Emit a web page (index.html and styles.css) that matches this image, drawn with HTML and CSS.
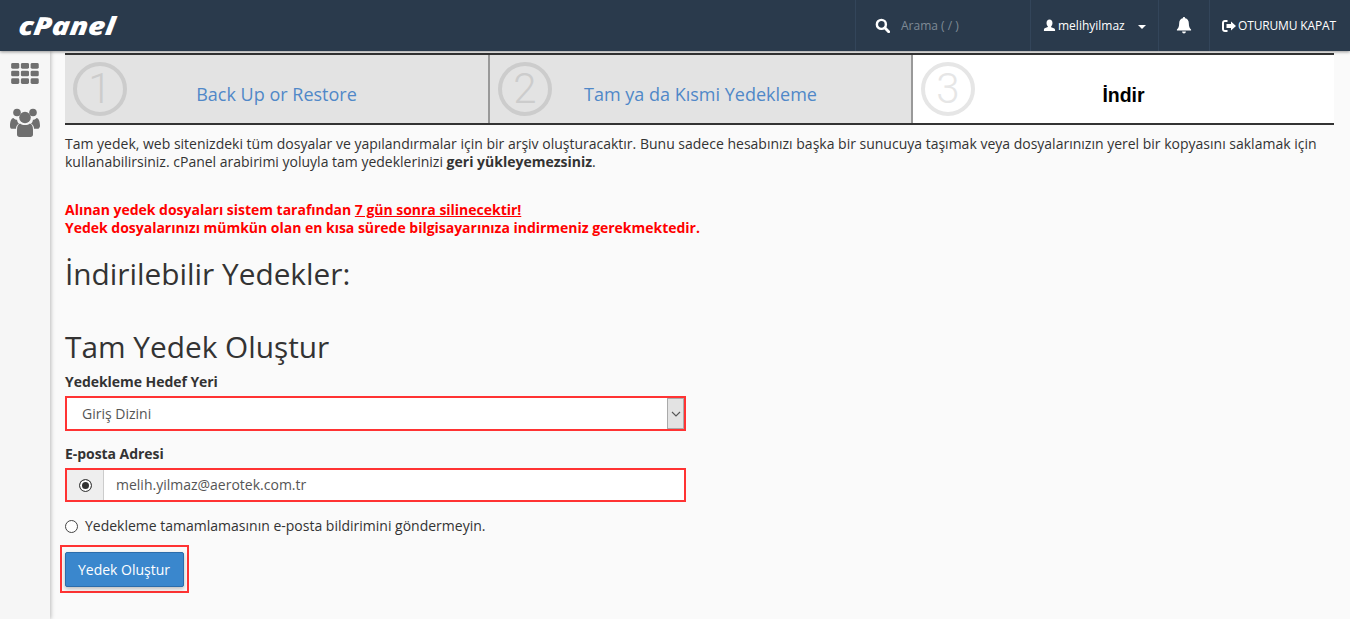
FILE: index.html
```html
<!DOCTYPE html>
<html lang="tr">
<head>
	<meta charset="utf-8">
	<title>Yedekleme Sihirbazı</title>
	<link rel="stylesheet" href="styles.css">
</head>
<body>
	<header class="topbar">
		<a class="logo" href="#">cPanel</a>
		<div class="top-right">
			<div class="top-item search">
				<svg class="icon-search" viewBox="0 0 16 16" width="15" height="15"><circle cx="6.8" cy="6.8" r="4.8" fill="none" stroke="#fff" stroke-width="2.6"/><path d="M10.4 10.4 14.6 14.6" stroke="#fff" stroke-width="3" stroke-linecap="round"/></svg>
				<span class="search-text">Arama ( / )</span>
			</div>
			<div class="top-item user">
				<svg viewBox="0 0 14 14" width="13" height="13"><path d="M7 .5c2 0 3.200 1.500 3.200 3.700 0 1.500-.6 2.800-1.400 3.500v1.300c1.800.7 4.200 1.200 4.200 2.700V13H1v-1.800c0-1.500 2.400-2 4.200-2.700V7.700C4.400 7 3.800 5.700 3.800 4.200 3.800 2 5 .5 7 .5z" fill="#fff"/></svg>
				<span>melihyilmaz</span>
				<i class="caret"></i>
			</div>
			<div class="top-item bell">
				<svg viewBox="0 0 16 18" width="16" height="17"><path d="M8 0c.7 0 1.200.5 1.200 1.200 2.600.5 3.900 2.600 3.900 5.300 0 3.500 1 5.300 2.400 6.700v1.100H.5v-1.100C1.900 11.800 2.900 10 2.900 6.500c0-2.700 1.300-4.800 3.900-5.300C6.800.5 7.300 0 8 0zM6 15.400h4c0 1.200-.9 2.100-2 2.100s-2-.9-2-2.100z" fill="#fff"/></svg>
			</div>
			<div class="top-item logout">
				<svg viewBox="0 0 14 12" width="14" height="12"><path d="M5.500 0v2H3C2.400 2 2 2.400 2 3v6c0 .6.400 1 1 1h2.500v2H3c-1.700 0-3-1.300-3-3V3c0-1.700 1.300-3 3-3zM9 1.500 14 6l-5 4.500V8H4.500V4H9z" fill="#fff"/></svg>
				<span>OTURUMU KAPAT</span>
			</div>
		</div>
	</header>

	<div class="page">
		<aside class="sidebar">
			<svg viewBox="0 0 29 22" width="28" height="21" fill="#6f6f6f">
				<rect x="0" y="0" width="8.500" height="6" rx="1.500"/><rect x="10.200" y="0" width="8.500" height="6" rx="1.500"/><rect x="20.400" y="0" width="8.500" height="6" rx="1.500"/>
				<rect x="0" y="8" width="8.500" height="6" rx="1.500"/><rect x="10.200" y="8" width="8.500" height="6" rx="1.500"/><rect x="20.400" y="8" width="8.500" height="6" rx="1.500"/>
				<rect x="0" y="16" width="8.500" height="6" rx="1.500"/><rect x="10.200" y="16" width="8.500" height="6" rx="1.500"/><rect x="20.400" y="16" width="8.500" height="6" rx="1.500"/>
			</svg>
			<svg viewBox="0 0 30 29" width="30" height="29" fill="#6f6f6f">
				<circle cx="7" cy="4.500" r="3.800"/><circle cx="23" cy="4.500" r="3.800"/><circle cx="15" cy="9.500" r="5.800"/>
				<path d="M0 18c0-5 1.500-8 3.500-8 .8 1.200 2 1.800 3.500 1.800.3 2 1 3.200 2 4-2 1-3 2.500-3 5H1.500C.5 20.800 0 19.500 0 18z"/>
				<path d="M30 18c0-5-1.500-8-3.500-8-.8 1.200-2 1.800-3.500 1.800-.3 2-1 3.200-2 4 2 1 3 2.500 3 5h4.500c1-.8 1.500-2.100 1.500-2.800z"/>
				<path d="M10 15.500c1.300 1 3 1.500 5 1.500s3.700-.5 5-1.500c1.800.5 3 2.500 3 6.500v4.500c0 1.300-1 2.500-2.500 2.500h-11C8 29 7 27.800 7 26.500V22c0-4 1.200-6 3-6.500z"/>
			</svg>
		</aside>

		<main class="content">
			<div class="steps">
				<div class="step">
					<span class="step-num">1</span>
					<a class="step-title" href="#">Back Up or Restore</a>
				</div>
				<div class="step">
					<span class="step-num">2</span>
					<a class="step-title" href="#">Tam ya da Kısmi Yedekleme</a>
				</div>
				<div class="step active">
					<span class="step-num">3</span>
					<span class="step-title">İndir</span>
				</div>
			</div>

			<p class="intro">Tam yedek, web sitenizdeki tüm dosyalar ve yapılandırmalar için bir arşiv oluşturacaktır. Bunu sadece hesabınızı başka bir sunucuya taşımak veya dosyalarınızın yerel bir kopyasını saklamak için kullanabilirsiniz. cPanel arabirimi yoluyla tam yedeklerinizi <b>geri yükleyemezsiniz</b>.</p>

			<p class="warning">Alınan yedek dosyaları sistem tarafından <u>7 gün sonra silinecektir!</u><br>Yedek dosyalarınızı mümkün olan en kısa sürede bilgisayarınıza indirmeniz gerekmektedir.</p>

			<h2 class="head-first">İndirilebilir Yedekler:</h2>
			<h2 class="head-second">Tam Yedek Oluştur</h2>

			<form class="backup-form">
				<label class="field-label">Yedekleme Hedef Yeri</label>
				<div class="select-box">
					<span class="select-value">Giriş Dizini</span>
					<span class="select-arrow">
						<svg viewBox="0 0 10 6" width="10" height="6"><path d="M1 1 5 5 9 1" fill="none" stroke="#555" stroke-width="1.100"/></svg>
					</span>
				</div>

				<label class="field-label">E-posta Adresi</label>
				<div class="input-box">
					<span class="addon"><i class="radio checked"></i></span>
					<span class="input-value">melih.yilmaz@aerotek.com.tr</span>
				</div>

				<div class="radio-row">
					<i class="radio"></i>
					<span>Yedekleme tamamlamasının e-posta bildirimini göndermeyin.</span>
				</div>

				<div class="btn-outline">
					<button class="btn" type="button">Yedek Oluştur</button>
				</div>
			</form>
		</main>
	</div>
</body>
</html>
```

FILE: styles.css
```css
*{margin: 0;padding: 0;box-sizing: border-box;}
html,body{height: 100%;overflow: hidden;}
body{
	font-family: "Open Sans", "Liberation Sans", sans-serif;
	font-size: 14px;
	line-height: 18px;
	color: #333;
	background: #fafafa;
}
a{text-decoration: none;}

/* top bar */
.topbar{
	height: 51px;
	background: #2a3a4c;
	display: flex;
	justify-content: space-between;
	align-items: stretch;
	box-shadow: 0 1px 3px rgba(0,0,0,.4);
	position: relative;
	z-index: 3;
}
.logo{
	font-family: "Open Sans", sans-serif;
	font-size: 25px;
	font-weight: 800;
	font-style: italic;
	line-height: 50px;
	color: #fff;
	margin-left: 19px;
	transform: scaleX(1.18) skewX(-6deg);
	transform-origin: left center;
}
.top-right{display: flex;}
.top-item{
	display: flex;
	align-items: center;
	color: #fff;
	font-size: 12px;
	border-left: 1px solid #33455a;
}
.search{width: 175px;padding-left: 19px;}
.search-text{margin-left: 11px;color: #7f8a96;}
.user{width: 128px;padding-left: 12px;gap: 2px;}
.caret{
	width: 0;
	height: 0;
	margin-left: 11px;
	margin-top: 3px;
	border-left: 4px solid transparent;
	border-right: 4px solid transparent;
	border-top: 4px solid #fff;
}
.bell{width: 51px;justify-content: center;}
.logout{width: 141px;padding-left: 12px;gap: 2px;letter-spacing: -.15px;}

/* sidebar + content */
.page{display: flex;height: 568px;}
.sidebar{
	width: 50px;
	flex: none;
	background: #f6f6f6;
	box-shadow: 1px 0 4px rgba(0,0,0,.25);
	display: flex;
	flex-direction: column;
	align-items: center;
	padding: 12px 0 0;
	gap: 24px;
	position: relative;
	z-index: 2;
}
.content{
	width: 1269px;
	margin-left: 15px;
	padding-top: 2px;
}

/* wizard steps */
.steps{
	display: flex;
	height: 72px;
	border-top: 2px solid #333;
	border-bottom: 2px solid #333;
}
.step{
	flex: 0 0 423px;
	background: #e3e3e3;
	display: flex;
	align-items: center;
	position: relative;
	border-left: 2px solid #999;
}
.step:first-child{border-left: 0;}
.step.active{background: #fff;}
.step-num{
	position: absolute;
	left: 8px;
	top: 7px;
	width: 54px;
	height: 54px;
	border: 4px solid #ccc;
	border-radius: 50%;
	font-family: Roboto, "Liberation Sans", sans-serif;
	font-weight: 300;
	font-size: 42px;
	line-height: 46px;
	text-align: center;
	color: #ccc;
}
.active .step-num{border-color: #e6e6e6;color: #e6e6e6;}
.step-title{
	flex: 1;
	text-align: center;
	font-size: 18px;
	line-height: 24px;
	color: #5088c8;
	padding-top: 10px;
}
.active .step-title{
	font-family: "Liberation Sans", sans-serif;
	font-size: 19.5px;
	font-weight: bold;
	color: #000;
	padding-top: 11px;
}

.intro{margin-top: 10px;}
.warning{margin-top: 30px;color: #f00;font-weight: bold;letter-spacing: -.02px;}

h2{font-size: 29.8px;font-weight: 400;line-height: 40px;color: #333;}
.head-first{margin-top: 17px;}
.head-second{margin-top: 33px;}

/* form */
.backup-form{width: 621px;}
.field-label{display: block;font-weight: bold;margin-top: 6px;height: 18px;letter-spacing: -.05px;}
.select-box{
	height: 35px;
	margin-top: 5px;
	margin-bottom: 14px;
	border: 2px solid #f33;
	background: #fff;
	display: flex;
	justify-content: space-between;
	align-items: center;
	padding-left: 15px;
	color: #555;
}
.select-arrow{
	width: 17px;
	height: 31px;
	background: #e3e3e3;
	border: 1px solid #aaa;
	display: flex;
	align-items: center;
	justify-content: center;
}
.input-box{
	height: 34px;
	margin-top: 5px;
	border: 2px solid #f33;
	background: #fff;
	display: flex;
	color: #555;
}
.addon{
	width: 37px;
	background: #eee;
	border-right: 1px solid #ccc;
	display: flex;
	align-items: center;
	justify-content: center;
}
.input-value{padding-left: 12px;line-height: 30px;}
.radio{
	display: block;
	flex: none;
	width: 13px;
	height: 13px;
	border: 1px solid #444;
	border-radius: 50%;
	background: #fff;
}
.radio.checked{
	background: #333;
	box-shadow: inset 0 0 0 2px #fff;
}
.radio-row{
	display: flex;
	align-items: center;
	gap: 7px;
	margin-top: 15px;
}
.btn-outline{
	width: 129px;
	height: 48px;
	margin: 10px 0 0 -5px;
	border: 2px solid #f33;
	padding: 5px 3px;
}
.btn{
	display: block;
	width: 119px;
	height: 35px;
	padding-right: 1px;
	background: #3a87cd;
	border: 1px solid #2c6dab;
	border-radius: 2px;
	color: #fff;
	font-family: inherit;
	font-size: 14px;
	box-shadow: 0 2px 4px rgba(0,0,0,.25);
}
```
